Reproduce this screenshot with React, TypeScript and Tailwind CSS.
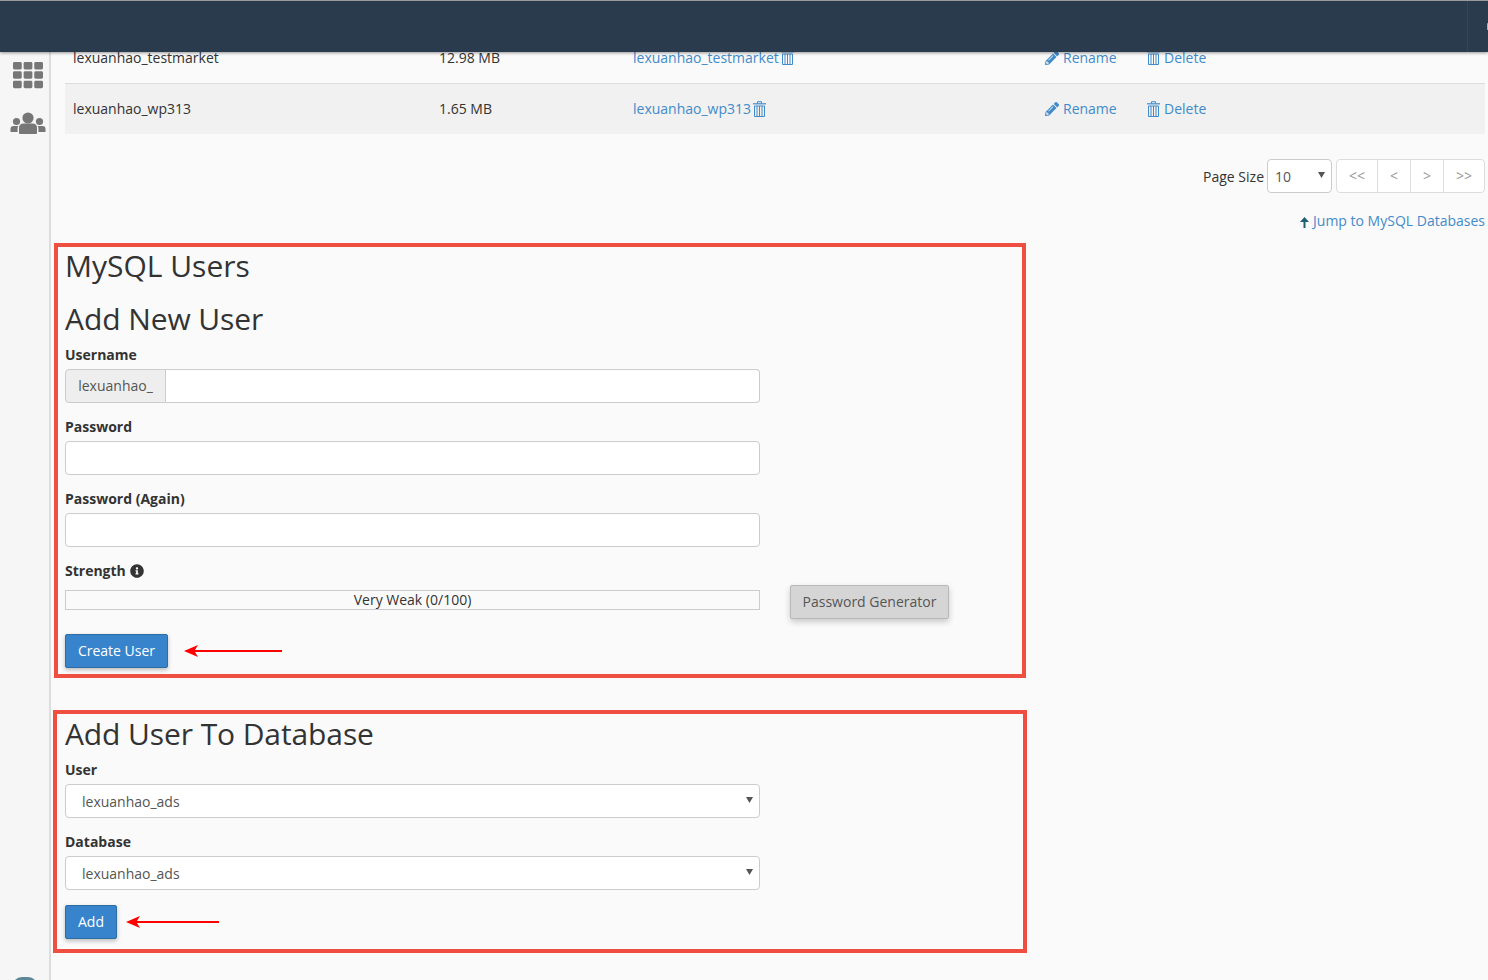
import React from "react";
import { FaTh, FaPencilAlt, FaInfoCircle } from "react-icons/fa";

const rows = [
  { name: "lexuanhao_testmarket", size: "12.98 MB", shaded: false },
  { name: "lexuanhao_wp313", size: "1.65 MB", shaded: true },
];

const inputClass =
  "block h-[34px] w-[695px] rounded-[4px] border border-[#cccccc] bg-white px-3 text-sm text-[#555555] outline-none";

const selectClass =
  "block h-[34px] w-[695px] appearance-none rounded-[4px] border border-[#cccccc] bg-white pt-[1px] pl-[16px] text-sm text-[#555555] outline-none";

const Label = ({ children }: { children: React.ReactNode }) => (
  <label className="block h-[20px] text-sm leading-[20px] font-bold text-[#333333]">{children}</label>
);

const Arrow = ({ width }: { width: number }) => (
  <svg width={width} height="14" viewBox={`0 0 ${width} 14`} className="shrink-0">
    <path d={`M0 7 L14 1 L11 6 H${width} V8 H11 L14 13 Z`} fill="#ff0000" />
  </svg>
);

const Trash = () => (
  <svg width="13" height="16" viewBox="0 0 13 16" className="mb-[1px] shrink-0" fill="none" stroke="currentColor">
    <path d="M4.5 2.5 V0.7 H8.5 V2.5" />
    <path d="M0 2.8 H13" strokeWidth="1.2" />
    <path d="M1.5 5 V15.5 H11.5 V5 Z" />
    <path d="M4 5 V15 M6.5 5 V15 M9 5 V15" strokeWidth="1" />
  </svg>
);

const Users = () => (
  <svg width="36" height="22" viewBox="0 0 36 22" fill="#777777">
    <circle cx="18" cy="6" r="5.6" />
    <path d="M9 21 V16 Q9 11.5 13.5 11.5 H22.5 Q27 11.5 27 16 V21 Q27 22 26 22 H10 Q9 22 9 21 Z" />
    <circle cx="6.5" cy="9.5" r="3.6" />
    <circle cx="29.5" cy="9.5" r="3.6" />
    <path d="M0.5 20 V17 Q0.5 14 3.5 14 H8.3 Q7.6 15 7.6 16.5 V20 Z" />
    <path d="M35.5 20 V17 Q35.5 14 32.5 14 H27.7 Q28.4 15 28.4 16.5 V20 Z" />
  </svg>
);

const Caret = () => (
  <svg width="7" height="6" viewBox="0 0 7 6" className="pointer-events-none absolute top-[13px] right-[7px]">
    <path d="M0 0 H7 L3.5 6 Z" fill="#555555" />
  </svg>
);

const App = () => {
  return (
    <div className="flex h-[980px] flex-col overflow-hidden bg-[#fafafa] font-['Open_Sans',sans-serif] text-sm text-[#333333]">
      <header className="relative z-10 flex h-[52px] shrink-0 justify-end overflow-hidden border-t border-[#9a9a9a] bg-[#2a3b4d] shadow-[0_1px_3px_rgba(0,0,0,0.4)]">
        <div className="flex w-[21px] shrink-0 items-center border-l border-[#34455a]">
          <span className="ml-[19px] h-[7px] w-[4px] rounded-full bg-[#8fb8d8]" />
        </div>
      </header>

      <div className="flex min-h-0 flex-1">
        <aside className="flex w-[51px] shrink-0 flex-col items-center justify-between border-r-[2px] border-[#dddddd] bg-[#f6f6f6] pl-[6px]">
          <div className="flex flex-col items-center pt-[7px] text-[#777777]">
            <FaTh className="h-[32px] w-[30px]" />
            <div className="mt-[21px]">
              <Users />
            </div>
          </div>
          <span className="mr-[6px] mb-[-17px] h-[20px] w-[26px] rounded-full bg-[#5b8796]" />
        </aside>

        <main className="min-w-0 flex-1 overflow-hidden pr-[3px]">
          <div className="mt-[-18px] ml-[14px]">
            {rows.map((row) => (
              <div
                key={row.name}
                className={`flex h-[50px] items-center border-b border-[#dddddd] px-2 last:border-b-0 ${row.shaded ? "bg-[#f1f1f1]" : "pb-[2px]"}`}
              >
                <span className="w-[366px]">{row.name}</span>
                <span className="w-[194px]">{row.size}</span>
                <span className="flex w-[412px] items-center text-[#428bca]">
                  {row.name}
                  <span className="ml-[2px] flex">
                    <Trash />
                  </span>
                </span>
                <span className="flex w-[102px] items-center gap-[4px] text-[#428bca]">
                  <FaPencilAlt className="h-[14px] w-[14px]" />
                  Rename
                </span>
                <span className="flex items-center gap-[4px] text-[#428bca]">
                  <Trash />
                  Delete
                </span>
              </div>
            ))}
          </div>

          <div className="mt-[25px] flex h-[34px] items-center justify-end">
            <span className="mt-[2px] mr-[3px]">Page Size</span>
            <div className="relative">
              <select className="block h-[34px] w-[65px] appearance-none rounded-[4px] border border-[#cccccc] bg-white pt-[1px] pl-[7px] text-sm text-[#555555]">
                <option>10</option>
              </select>
              <Caret />
            </div>
            <div className="ml-[4px] flex h-[34px] rounded-[4px] border border-[#dddddd] bg-white text-[#999999]">
              <span className="flex w-[41px] items-center justify-center border-r border-[#dddddd] pb-[1px]">&lt;&lt;</span>
              <span className="flex w-[33px] items-center justify-center border-r border-[#dddddd] pb-[1px]">&lt;</span>
              <span className="flex w-[33px] items-center justify-center border-r border-[#dddddd] pb-[1px]">&gt;</span>
              <span className="flex w-[40px] items-center justify-center pb-[1px]">&gt;&gt;</span>
            </div>
          </div>

          <div className="mt-[18px] flex h-[20px] items-center justify-end text-[#428bca]">
            <svg width="9" height="11" viewBox="0 0 9 11" className="mt-[3px] mr-[4px]">
              <path d="M4.5 0 L9 5 H5.5 V11 H3.5 V5 H0 Z" fill="#1f5f73" />
            </svg>
            Jump to MySQL Databases
          </div>

          <section className="mt-[12px] ml-[3px] h-[435px] w-[972px] border-4 border-[#ee4f40] pl-[7px]">
            <h2 className="mt-[1px] h-[36px] text-[30px] leading-[36px] font-normal">MySQL Users</h2>
            <h2 className="mt-[17px] h-[36px] text-[30px] leading-[36px] font-normal tracking-[-0.08px]">Add New User</h2>
            <div className="mt-[8px]">
              <Label>Username</Label>
              <div className="mt-[4px] flex h-[34px] w-[695px]">
                <span className="flex w-[101px] items-center justify-center rounded-l-[4px] border border-[#cccccc] bg-[#eeeeee] text-[#555555]">
                  lexuanhao_
                </span>
                <input className="min-w-0 flex-1 rounded-r-[4px] border border-l-0 border-[#cccccc] bg-white px-3 outline-none" />
              </div>
            </div>
            <div className="mt-[14px]">
              <Label>Password</Label>
              <input type="password" className={`mt-[4px] ${inputClass}`} />
            </div>
            <div className="mt-[14px]">
              <Label>Password (Again)</Label>
              <input type="password" className={`mt-[4px] ${inputClass}`} />
            </div>
            <div className="mt-[14px] flex h-[20px] items-center gap-[4px] font-bold">
              Strength
              <FaInfoCircle className="h-[14px] w-[14px] text-[#333333]" />
            </div>
            <div className="flex items-start">
              <div className="mt-[9px] flex h-[20px] w-[695px] items-center justify-center border border-[#cccccc] text-sm">
                Very Weak (0/100)
              </div>
              <button className="mt-[4px] ml-[30px] h-[34px] w-[159px] rounded-[2px] border border-[#b8b8b8] bg-[#d5d5d5] text-[#555555] shadow-[0_3px_6px_rgba(0,0,0,0.2)]">
                Password Generator
              </button>
            </div>
            <div className="mt-[15px] flex items-center gap-[16px]">
              <button className="h-[34px] w-[103px] rounded-[2px] border border-[#2e6da4] bg-[#3784cc] text-white shadow-[0_2px_4px_rgba(0,0,0,0.25)]">
                Create User
              </button>
              <Arrow width={98} />
            </div>
          </section>

          <section className="mt-[32px] ml-[2px] h-[243px] w-[974px] border-4 border-[#ee4f40] pl-[8px]">
            <h2 className="mt-[2px] h-[36px] text-[30px] leading-[36px] font-normal tracking-[-0.1px]">Add User To Database</h2>
            <div className="mt-[8px]">
              <Label>User</Label>
              <div className="relative mt-[4px] w-[695px]">
                <select className={selectClass}>
                  <option>lexuanhao_ads</option>
                </select>
                <Caret />
              </div>
            </div>
            <div className="mt-[14px]">
              <Label>Database</Label>
              <div className="relative mt-[4px] w-[695px]">
                <select className={selectClass}>
                  <option>lexuanhao_ads</option>
                </select>
                <Caret />
              </div>
            </div>
            <div className="mt-[15px] flex items-center gap-[9px]">
              <button className="h-[34px] w-[52px] rounded-[2px] border border-[#2e6da4] bg-[#3784cc] text-white shadow-[0_2px_4px_rgba(0,0,0,0.25)]">
                Add
              </button>
              <Arrow width={93} />
            </div>
          </section>
        </main>
      </div>
    </div>
  );
};

export default App;
